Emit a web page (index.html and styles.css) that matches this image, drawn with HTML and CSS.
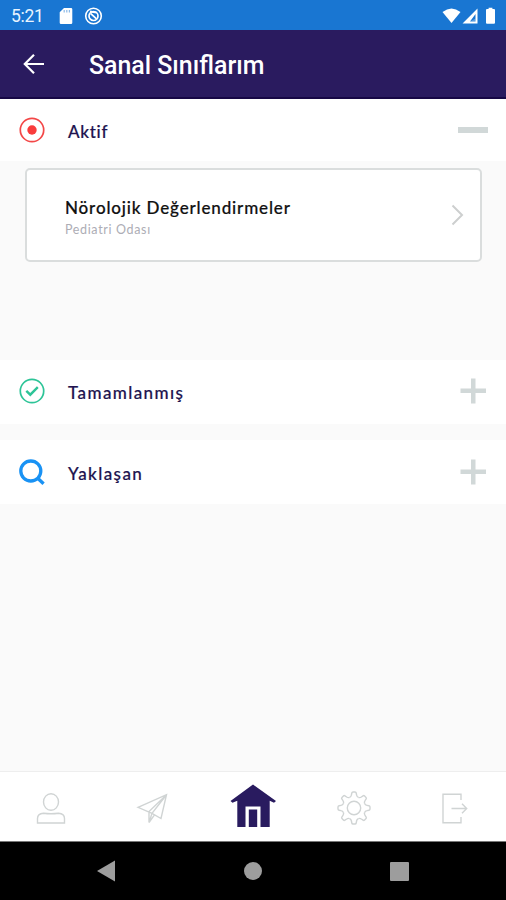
FILE: index.html
```html
<!DOCTYPE html>
<html lang="tr">
<head>
<meta charset="utf-8">
<title>Sanal Sınıflarım</title>
<link rel="stylesheet" href="styles.css">
</head>
<body>
<div class="screen">
  <div class="status">
    <span class="clock">5:21</span>
    <svg class="sd" width="14" height="18" viewBox="0 0 14 18"><path fill="#fff" d="M5 1h7a1.3 1.3 0 0 1 1.3 1.3v13.4A1.3 1.3 0 0 1 12 17H2a1.3 1.3 0 0 1-1.3-1.3V5.3z"/><path stroke="#1976d2" stroke-opacity=".5" stroke-width="1.2" d="M5.2 3v2.500M7.800 3v2.500M10.400 3v2.500"/></svg>
    <svg class="sync" width="19" height="18" viewBox="0 0 19 18" fill="none" stroke="#fff"><circle cx="9.5" cy="9" r="7.8" stroke-width="1.6"/><circle cx="9.5" cy="9" r="4.5" stroke-width="1.7"/><path stroke-width="1.8" d="M6.5 6.4l6 5.4M6 4.5l6.8 1.2"/></svg>
    <svg class="signals" width="56" height="18" viewBox="0 0 56 18"><path fill="#fff" d="M.5 5Q9.500-2 18.500 5L9.500 16z"/><path fill="#fff" fill-rule="evenodd" d="M20.500 16.500L35.500 1.500v15zM28 14.500h5.500V7z"/><path fill="#fff" fill-opacity=".3" d="M28 14.500h5.500v-3z"/><path fill="#fff" d="M45 2h1.600V.8h3.800V2H52a1 1 0 0 1 1 1v12.800a1 1 0 0 1-1 1h-7a1 1 0 0 1-1-1V3a1 1 0 0 1 1-1z"/></svg>
  </div>
  <header class="header">
    <svg class="back" width="22" height="22" viewBox="0 0 22 22" fill="none" stroke="#fff" stroke-width="2.2"><path d="M21 11H2.500M11 1.800L1.800 11l9.200 9.200"/></svg>
    <h1>Sanal Sınıflarım</h1>
  </header>
  <main>
    <section class="row first">
      <svg width="26" height="26" viewBox="0 0 26 26"><circle cx="13" cy="13" r="11.700" fill="none" stroke="#f34747" stroke-width="1.700"/><circle cx="13" cy="13" r="4.700" fill="#f93c3c"/></svg>
      <span class="label aktif">Aktif</span>
      <svg class="toggle" width="30" height="26" viewBox="0 0 30 26"><path fill="#d1d8d8" d="M0 10h30v6H0z"/></svg>
    </section>
    <div class="panel">
      <article class="card">
        <div><h2>Nörolojik Değerlendirmeler</h2><p>Pediatri Odası</p></div>
        <svg width="13" height="22" viewBox="0 0 13 22" fill="none" stroke="#cdcfcf" stroke-width="2"><path d="M1.500 1.500L11 11l-9.500 9.500"/></svg>
      </article>
    </div>
    <section class="row">
      <svg width="26" height="26" viewBox="0 0 26 26" fill="none" stroke="#2dc497"><circle cx="13" cy="13" r="11.700" stroke-width="1.700"/><path stroke-width="2.400" d="M7.300 12.800l4 3.900 7.500-7.500"/></svg>
      <span class="label done">Tamamlanmış</span>
      <svg class="toggle" width="30" height="26" viewBox="0 0 30 26"><path fill="#d1d8d8" d="M13 .5h4.500v10H28V15H17.500v10.500H13V15H2.500v-4.500H13z"/></svg>
    </section>
    <section class="row last">
      <svg width="26" height="26" viewBox="0 0 26 26" fill="none" stroke="#1992f4" stroke-width="3.300"><circle cx="11.800" cy="12" r="10"/><path d="M18.200 18.700l6.400 6"/></svg>
      <span class="label soon">Yaklaşan</span>
      <svg class="toggle" width="30" height="26" viewBox="0 0 30 26"><path fill="#d1d8d8" d="M13 .5h4.500v10H28V15H17.500v10.500H13V15H2.500v-4.500H13z"/></svg>
    </section>
  </main>
  <nav class="tabs">
    <svg width="36" height="36" viewBox="0 0 36 36"><ellipse cx="18" cy="12" rx="7.500" ry="8.300"/><path d="M4.500 33v-4.500q0-4.800 6-5.200 7.500 1 15 0 6 .4 6 5.200V33z"/></svg>
    <svg width="36" height="36" viewBox="0 0 36 36"><path d="M4 17.300L32.500 4.700 27 28.500l-9-5.200zM32.500 4.700L15 21.500v11l3-9.200zM15 32.500l5.500-7.700"/></svg>
    <svg class="home" width="46" height="46" viewBox="0 0 46 46"><path fill="#291b5f" d="M23 1.500L46 18l-2 1.700-4.300-2V44H7.300V17.700L2.500 19.700.5 18z"/><path fill="#fff" d="M15.500 44V23.500h15V44z"/><path fill="#291b5f" d="M18.800 44V26.500h8.400V44z"/></svg>
    <svg width="36" height="36" viewBox="-18 -18 36 36"><defs><path id="tooth" d="M-4.400-10.600Q-2.900-11.200-2.600-13L-2.200-15Q-2-16-1-16H1Q2-16 2.200-15L2.600-13Q2.900-11.200 4.400-10.600"/></defs><use href="#tooth"/><use href="#tooth" transform="rotate(45)"/><use href="#tooth" transform="rotate(90)"/><use href="#tooth" transform="rotate(135)"/><use href="#tooth" transform="rotate(180)"/><use href="#tooth" transform="rotate(225)"/><use href="#tooth" transform="rotate(270)"/><use href="#tooth" transform="rotate(315)"/><circle r="6.700"/></svg>
    <svg width="36" height="36" viewBox="0 0 36 36"><path d="M24 10V4.200H6v28.600h18V27M14.500 18.500h15.200M25 13.800l4.700 4.700-4.700 4.700"/></svg>
  </nav>
  <div class="system">
    <svg width="20" height="22" viewBox="0 0 20 22"><path fill="#9d9d9d" d="M1 11L19 .5v21z"/></svg>
    <span class="dot"></span>
    <span class="square"></span>
  </div>
</div>
</body>
</html>
```
FILE: styles.css
```css
* { box-sizing: border-box; }
body, h1, h2, p { margin: 0; }
svg { display: block; flex: none; }
.screen { display: flex; flex-direction: column; width: 506px; height: 900px; background: #fafafa; font-family: Lato, sans-serif; overflow: hidden; }
.status { display: flex; align-items: center; height: 30px; padding: 1px 8px 0 11px; background: #1976d2; color: #e9f4ff; }
.clock { width: 48px; font: 400 17.5px/20px Roboto, sans-serif; letter-spacing: -.3px; }
.sync { margin-left: 11px; }
.signals { margin-left: auto; margin-right: 0; }
.header { display: flex; align-items: center; height: 69px; padding: 0 24px 0 23px; background: #2a1b5f; border-bottom: 2px solid #170845; color: #fff; }
h1 { margin-left: 44px; padding-top: 4px; font: 500 24.9px/30px Roboto, sans-serif; white-space: nowrap; }
main { flex: 1; }
.row { display: flex; align-items: center; height: 64px; padding: 0 18px 2px 19px; background: #fff; }
.first { height: 62px; padding-bottom: 0; }
.last { margin-top: 16px; padding-bottom: 0; }
.label { margin-left: 23px; padding-top: 4px; color: #21134f; font-size: 17px; line-height: 24px; font-weight: 500; letter-spacing: 1.4px; -webkit-text-stroke: .2px #21134f; }
.aktif { letter-spacing: .7px; }
.toggle { margin-left: auto; }
.panel { height: 199px; padding: 7px 24px 0 25px; }
.card { display: flex; align-items: center; justify-content: space-between; height: 94px; padding: 0 16px 0 38px; background: #fff; border: 2px solid #dadddd; border-radius: 5px; }
.card div { padding-top: 5px; }
h2 { font-size: 17px; line-height: 24px; font-weight: 500; color: #111; letter-spacing: .85px; -webkit-text-stroke: .2px #111; white-space: nowrap; }
.card p { font-size: 12.5px; line-height: 20px; color: #adadb5; letter-spacing: .65px; }
.tabs { display: grid; grid-template-columns: repeat(5, 1fr); align-items: center; justify-items: center; height: 71px; padding-top: 3px; background: #fff; border-top: 1px solid #eee; border-bottom: 1px solid #777; }
.tabs svg { fill: none; stroke: #d0d4d4; stroke-width: 1.4; }
.tabs .home { stroke: none; margin-bottom: 4px; }
.system { display: flex; align-items: center; justify-content: space-between; height: 58px; padding: 0 97px 0 96px; background: #000; }
.dot { width: 18px; height: 18px; border-radius: 50%; background: #9d9d9d; }
.square { width: 19px; height: 19px; border-radius: 1px; background: #9d9d9d; }
```
